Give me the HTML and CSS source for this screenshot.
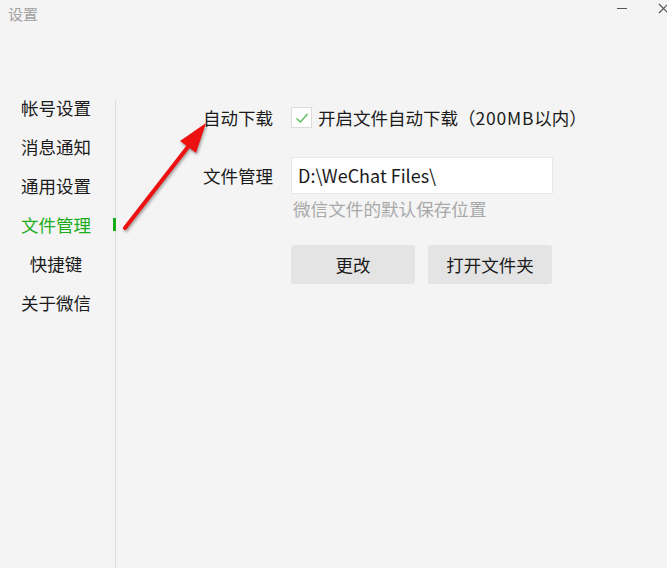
FILE: index.html
```html
<!DOCTYPE html>
<html lang="zh-CN">
<head>
    <meta charset="UTF-8">
    <meta name="viewport" content="width=device-width, initial-scale=1.0">
    <title>设置</title>
    <link rel="stylesheet" href="styles.css">
</head>
<body>
    <div class="window">
        <div class="titlebar">
            <span class="title">设置</span>
            <div class="controls">
                <span class="minimize"></span>
                <svg class="close" width="11" height="11" viewBox="0 0 11 11">
                    <path d="M1 1 L10 10 M10 1 L1 10" stroke="#555" stroke-width="1.2" fill="none"/>
                </svg>
            </div>
        </div>

        <div class="content">
            <ul class="sidebar">
                <li class="nav-item">帐号设置</li>
                <li class="nav-item">消息通知</li>
                <li class="nav-item">通用设置</li>
                <li class="nav-item active">文件管理</li>
                <li class="nav-item">快捷键</li>
                <li class="nav-item">关于微信</li>
            </ul>
            <div class="divider"></div>

            <div class="panel">
                <div class="row">
                    <span class="label">自动下载</span>
                    <label class="checkbox">
                        <span class="box">
                            <svg width="14" height="12" viewBox="0 0 14 12">
                                <path d="M1.5 6.5 L5.5 10 L12.5 2" stroke="#5cbf5c" stroke-width="1.5" fill="none"/>
                            </svg>
                        </span>
                        <span class="check-text">开启文件自动下载（<span class="latin">200MB</span>以内）</span>
                    </label>
                </div>

                <div class="row row-path">
                    <span class="label">文件管理</span>
                    <div class="path-input">D:\WeChat Files\</div>
                </div>
                <p class="hint">微信文件的默认保存位置</p>

                <div class="buttons">
                    <button class="btn">更改</button>
                    <button class="btn">打开文件夹</button>
                </div>
            </div>
        </div>

        <!-- annotation arrow drawn over the screenshot -->
        <svg class="arrow" width="110" height="130" viewBox="0 0 110 130">
            <line x1="15" y1="118" x2="81" y2="33" stroke="#ee1111" stroke-width="4" stroke-linecap="round"/>
            <polygon points="96,13 86,43 70,31" fill="#ee1111"/>
        </svg>
    </div>
</body>
</html>
```

FILE: styles.css
```css
* {
    margin: 0;
    padding: 0;
    box-sizing: border-box;
}

body {
    font-family: "Noto Sans CJK SC", "Noto Sans", sans-serif;
    background: #f4f4f4;
    color: #1b1b1b;
    width: 667px;
    height: 568px;
    overflow: hidden;
}

.window {
    position: relative;
    height: 568px;
    display: flex;
    flex-direction: column;
}

.titlebar {
    height: 88px;
    display: flex;
    justify-content: space-between;
    align-items: flex-start;
}

.title {
    font-size: 15px;
    color: #a0a0a0;
    line-height: 15px;
    margin: 6px 0 0 8px;
}

.controls {
    display: flex;
    align-items: center;
    gap: 31px;
    margin-top: 3px;
    margin-right: -2px;
}

.minimize {
    display: block;
    width: 10px;
    height: 1px;
    background: #555;
}

.content {
    flex: 1;
    display: flex;
}

.sidebar {
    list-style: none;
    width: 112px;
}

.nav-item {
    position: relative;
    height: 39px;
    line-height: 39px;
    text-align: center;
    font-size: 17.5px;
}

.nav-item.active {
    color: #1aad19;
}

.nav-item.active::after {
    content: "";
    position: absolute;
    right: -4px;
    top: 13px;
    width: 3px;
    height: 13px;
    background: #1aad19;
}

.divider {
    width: 1px;
    margin: 12px 0 0 3px;
    background: #dedede;
}

.panel {
    padding-top: 19px;
}

.row {
    display: flex;
    align-items: center;
    gap: 18px;
}

.label {
    width: 157px;
    text-align: right;
    font-size: 17.5px;
    line-height: 20px;
}

.checkbox {
    display: flex;
    align-items: center;
    gap: 6px;
    font-size: 17.5px;
    line-height: 20px;
}

.latin {
    letter-spacing: 0.8px;
}

.box {
    width: 21px;
    height: 21px;
    background: #fff;
    border: 1px solid #dcdcdc;
    display: flex;
    align-items: center;
    justify-content: center;
}

.row-path {
    margin-top: 29px;
}

.path-input {
    width: 262px;
    height: 37px;
    background: #fff;
    border: 1px solid #e8e8e8;
    padding-left: 6px;
    font-size: 18px;
    line-height: 34px;
}

.hint {
    margin: 5px 0 0 177px;
    font-size: 17.6px;
    line-height: 20px;
    color: #a9a9a9;
}

.buttons {
    display: flex;
    gap: 13px;
    margin: 26px 0 0 175px;
}

.btn {
    width: 124px;
    height: 39px;
    border: none;
    border-radius: 3px;
    background: #e4e4e4;
    color: #1b1b1b;
    font-family: inherit;
    font-size: 17.5px;
}

.arrow {
    position: absolute;
    left: 110px;
    top: 110px;
    filter: drop-shadow(1px 2px 1.5px rgba(0, 0, 0, 0.35));
}
```
